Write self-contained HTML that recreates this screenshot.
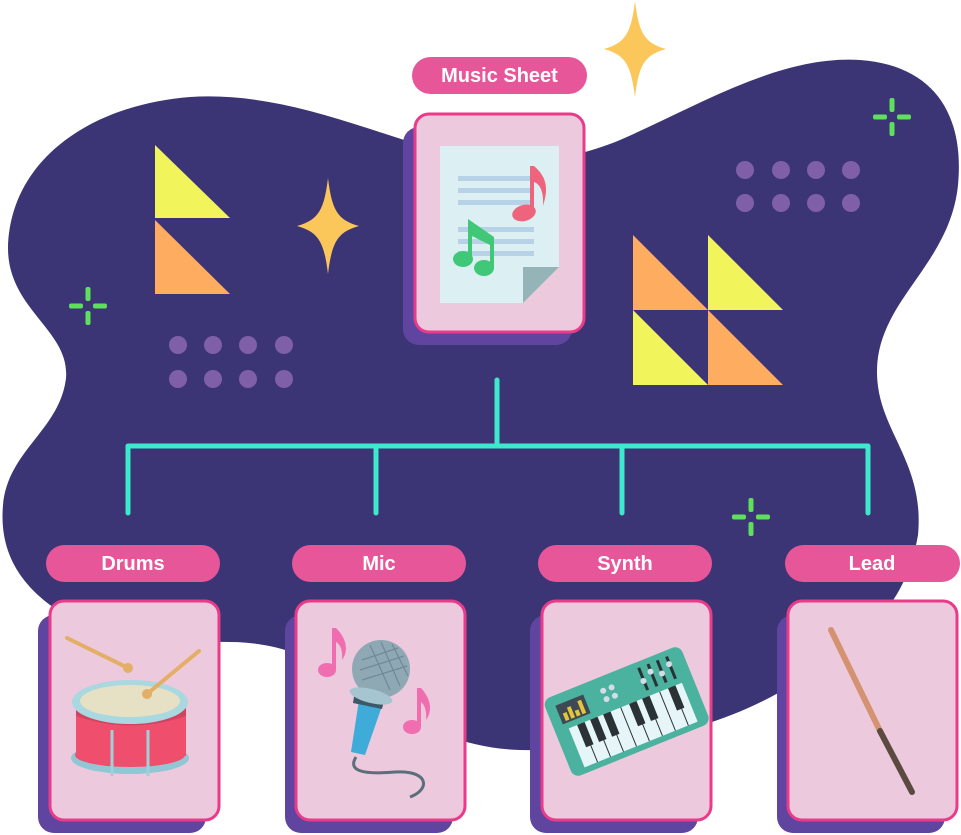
<!DOCTYPE html>
<html><head><meta charset="utf-8"><style>
html,body{margin:0;padding:0;background:#fff;width:961px;height:835px;overflow:hidden}
svg{display:block}
text{font-family:"Liberation Sans",Arial,sans-serif;font-weight:bold;font-size:20px;fill:#fff}
</style></head><body>
<svg width="961" height="835" viewBox="0 0 961 835" xmlns="http://www.w3.org/2000/svg">
<defs>
<g id="plus"><rect x="-2.5" y="-19" width="5" height="14" rx="2"/><rect x="-2.5" y="5" width="5" height="14" rx="2"/><rect x="-19" y="-2.5" width="14" height="5" rx="2"/><rect x="5" y="-2.5" width="14" height="5" rx="2"/></g>
<path id="star" d="M0,-48 C4,-15 10,-6 31,0 C10,6 4,15 0,48 C-4,15 -10,6 -31,0 C-10,-6 -4,-15 0,-48Z"/>
</defs>
<!-- blob -->
<path fill="#3b3575" d="M190,97 C270,92 340,120 420,145 C500,168 560,165 620,140 C700,105 780,55 860,60 C930,65 965,110 958,185 C950,265 878,300 877,370 C876,430 925,460 918,535 C905,610 860,645 780,692 C700,737 600,752 520,750 C440,748 370,700 300,655 C260,640 235,642 200,642 C140,640 90,630 50,605 C10,575 0,540 3,505 C8,450 60,430 66,378 C70,330 8,310 8,248 C10,160 90,105 190,97Z"/>
<!-- triangles left -->
<polygon fill="#f2f45c" points="155,145 155,218 230,218"/>
<polygon fill="#fdac60" points="155,220 155,294 230,294"/>
<!-- triangles right -->
<polygon fill="#fdac60" points="633,235 633,310 708,310"/>
<polygon fill="#f2f45c" points="708,235 708,310 783,310"/>
<polygon fill="#f2f45c" points="633,310 633,385 708,385"/>
<polygon fill="#fdac60" points="708,310 708,385 783,385"/>
<!-- dots -->
<g fill="#7f5fa8">
<circle cx="178" cy="345" r="9"/><circle cx="213" cy="345" r="9"/><circle cx="248" cy="345" r="9"/><circle cx="284" cy="345" r="9"/>
<circle cx="178" cy="379" r="9"/><circle cx="213" cy="379" r="9"/><circle cx="248" cy="379" r="9"/><circle cx="284" cy="379" r="9"/>
<circle cx="745" cy="170" r="9"/><circle cx="781" cy="170" r="9"/><circle cx="816" cy="170" r="9"/><circle cx="851" cy="170" r="9"/>
<circle cx="745" cy="203" r="9"/><circle cx="781" cy="203" r="9"/><circle cx="816" cy="203" r="9"/><circle cx="851" cy="203" r="9"/>
</g>
<!-- stars -->
<g fill="#fcc75a"><use href="#star" x="635" y="49"/><use href="#star" x="328" y="226"/></g>
<g fill="#5ee05a"><use href="#plus" x="88" y="306"/><use href="#plus" x="892" y="117"/><use href="#plus" x="751" y="517"/></g>
<!-- connectors -->
<g stroke="#3de8cc" stroke-width="5" stroke-linecap="round" fill="none">
<path d="M497,380 V446 M128,446 H868 M128,446 V513 M376,446 V513 M622,446 V513 M868,446 V513"/>
</g>
<!-- music sheet card -->
<rect x="403" y="127" width="169" height="218" rx="16" fill="#5f45a0"/>
<rect x="415" y="114" width="169" height="218" rx="14" fill="#ecc9dc" stroke="#ea3a8a" stroke-width="3"/>
<rect x="412" y="57" width="175" height="37" rx="18.5" fill="#e8569a"/>
<text x="499.5" y="82" text-anchor="middle">Music Sheet</text>
<polygon fill="#dcf0f3" points="440,146 559,146 559,267 523,303 440,303"/>
<polygon fill="#94b4b8" points="523,303 559,267 523,267"/>
<g fill="#b7d2e6"><rect x="458" y="176" width="72" height="5"/><rect x="458" y="188" width="72" height="5"/><rect x="458" y="200" width="72" height="5"/><rect x="458" y="227" width="76" height="5"/><rect x="458" y="239" width="76" height="5"/><rect x="458" y="251" width="76" height="5"/></g>
<g fill="#ee647c"><ellipse cx="524" cy="213" rx="12" ry="8" transform="rotate(-15 524 213)"/><path d="M530,213 L530,166 L534,166 C548,178 548,190 543,206 C544,192 540,184 534,182 L534,213Z"/></g>
<g fill="#40c878"><ellipse cx="463" cy="259" rx="10" ry="8"/><ellipse cx="484" cy="268" rx="10" ry="8"/><path d="M468,259 L468,219 L494,237 L494,268 L490,268 L490,245 L472,236 L472,259Z"/></g>
<!-- bottom cards -->
<g>
<rect x="38" y="615" width="168" height="218" rx="16" fill="#5f45a0"/>
<rect x="50" y="601" width="169" height="219" rx="14" fill="#ecc9dc" stroke="#ea3a8a" stroke-width="3"/>
<rect x="46" y="545" width="174" height="37" rx="18.5" fill="#e8569a"/>
<text x="133" y="570" text-anchor="middle">Drums</text>
<rect x="285" y="615" width="168" height="218" rx="16" fill="#5f45a0"/>
<rect x="296" y="601" width="169" height="219" rx="14" fill="#ecc9dc" stroke="#ea3a8a" stroke-width="3"/>
<rect x="292" y="545" width="174" height="37" rx="18.5" fill="#e8569a"/>
<text x="379" y="570" text-anchor="middle">Mic</text>
<rect x="530" y="615" width="168" height="218" rx="16" fill="#5f45a0"/>
<rect x="542" y="601" width="169" height="219" rx="14" fill="#ecc9dc" stroke="#ea3a8a" stroke-width="3"/>
<rect x="538" y="545" width="174" height="37" rx="18.5" fill="#e8569a"/>
<text x="625" y="570" text-anchor="middle">Synth</text>
<rect x="777" y="615" width="168" height="218" rx="16" fill="#5f45a0"/>
<rect x="788" y="601" width="169" height="219" rx="14" fill="#ecc9dc" stroke="#ea3a8a" stroke-width="3"/>
<rect x="785" y="545" width="175" height="37" rx="18.5" fill="#e8569a"/>
<text x="872" y="570" text-anchor="middle">Lead</text>
</g>
<!-- drum -->
<g>
<ellipse cx="130" cy="758" rx="59" ry="16" fill="#92c6d4"/>
<rect x="76" y="702" width="110" height="54" fill="#ef4f6c"/>
<ellipse cx="130" cy="755" rx="55" ry="12" fill="#ef4f6c"/>
<path d="M76,716 Q130,735 186,716 V706 H76Z" fill="#d14460"/>
<g stroke="#9fd0dc" stroke-width="3"><line x1="112" y1="730" x2="112" y2="776"/><line x1="148" y1="730" x2="148" y2="776"/></g>
<ellipse cx="130" cy="702" rx="58" ry="22" fill="#a9d8e0"/>
<ellipse cx="130" cy="701" rx="50" ry="16" fill="#e6e0c4"/>
<g stroke="#e3ae66" stroke-width="4" stroke-linecap="round"><line x1="67" y1="638" x2="128" y2="668"/><line x1="199" y1="651" x2="147" y2="694"/></g>
<circle cx="128" cy="668" r="5" fill="#e3ae66"/><circle cx="147" cy="694" r="5" fill="#e3ae66"/>
</g>
<!-- mic -->
<g>
<path d="M356,757 C348,770 360,775 395,772 C430,770 430,790 410,797" fill="none" stroke="#5a6f7a" stroke-width="3"/>
<polygon fill="#3fabd9" points="359,700 382,706 365,755 351,752"/>
<polygon fill="#3d5868" points="355,690 385,697 382,709 353,703"/>
<circle cx="381" cy="669" r="29" fill="#8ea9b4"/>
<g stroke="#6f8a96" stroke-width="1.2" fill="none"><path d="M362,660 L398,648 M360,670 L404,656 M362,680 L407,666 M370,645 L390,690 M381,642 L400,686 M392,644 L408,676"/></g>
<ellipse cx="371" cy="696" rx="22" ry="7" fill="#a5c6d0" transform="rotate(14 371 696)"/>
<g fill="#f06eb0"><ellipse cx="327" cy="670" rx="9" ry="7"/><path d="M332,670 V628 H336 C348,640 348,652 342,660 C343,650 340,644 336,642 V670Z"/>
<ellipse cx="412" cy="727" rx="9" ry="7"/><path d="M417,727 V688 H421 C432,700 432,712 426,720 C427,710 424,704 421,702 V727Z"/></g>
</g>
<!-- synth -->
<g transform="rotate(-22 625 710)">
<rect x="552" y="670" width="148" height="84" rx="8" fill="#4ab29e"/>
<rect x="566" y="706" width="122" height="42" fill="#e6f6f8"/>
<g stroke="#2b3236" stroke-width="1"><line x1="580" y1="706" x2="580" y2="748"/><line x1="594" y1="706" x2="594" y2="748"/><line x1="608" y1="706" x2="608" y2="748"/><line x1="622" y1="706" x2="622" y2="748"/><line x1="636" y1="706" x2="636" y2="748"/><line x1="650" y1="706" x2="650" y2="748"/><line x1="664" y1="706" x2="664" y2="748"/><line x1="678" y1="706" x2="678" y2="748"/></g>
<g fill="#2b3236"><rect x="575" y="706" width="8" height="24"/><rect x="589" y="706" width="8" height="24"/><rect x="603" y="706" width="8" height="24"/><rect x="631" y="706" width="8" height="24"/><rect x="645" y="706" width="8" height="24"/><rect x="673" y="706" width="8" height="24"/>
<rect x="562" y="680" width="30" height="20" fill="#3d4a55"/><rect x="652" y="676" width="3" height="24"/><rect x="662" y="676" width="3" height="24"/><rect x="672" y="676" width="3" height="24"/><rect x="682" y="676" width="3" height="24"/></g>
<g fill="#e4c53c"><rect x="566" y="690" width="4" height="8"/><rect x="572" y="686" width="4" height="12"/><rect x="578" y="692" width="4" height="6"/><rect x="584" y="684" width="4" height="14"/></g>
<g fill="#d3dde8"><circle cx="612" cy="684" r="3"/><circle cx="621" cy="684" r="3"/><circle cx="612" cy="693" r="3"/><circle cx="621" cy="693" r="3"/><circle cx="653" cy="690" r="3"/><circle cx="663" cy="684" r="3"/><circle cx="673" cy="690" r="3"/><circle cx="683" cy="684" r="3"/></g>
</g>
<!-- lead stick -->
<g stroke-linecap="round" stroke-width="6"><line x1="831" y1="630" x2="880" y2="731" stroke="#d49270"/><line x1="880" y1="731" x2="912" y2="792" stroke="#5c4a40"/></g>
</svg>
</body></html>
